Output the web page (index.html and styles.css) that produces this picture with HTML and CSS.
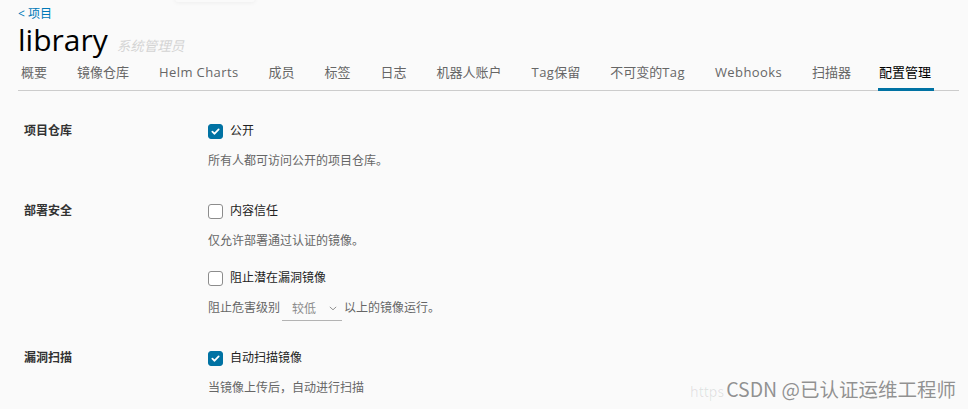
FILE: index.html
```html
<!DOCTYPE html>
<html lang="zh">
<head>
<meta charset="utf-8">
<link rel="stylesheet" href="styles.css">
</head>
<body>
<div class="tip-ghost"></div>
<div class="page">
  <a class="back" href="#">&lt; 项目</a>
  <div class="title-row">
    <h1 class="title">library</h1>
    <span class="role">系统管理员</span>
  </div>
  <nav class="tabs">
    <a class="tab">概要</a>
    <a class="tab">镜像仓库</a>
    <a class="tab"><span class="lat">Helm Charts</span></a>
    <a class="tab">成员</a>
    <a class="tab">标签</a>
    <a class="tab">日志</a>
    <a class="tab">机器人账户</a>
    <a class="tab"><span class="lat">Tag</span>保留</a>
    <a class="tab">不可变的<span class="lat">Tag</span></a>
    <a class="tab"><span class="lat">Webhooks</span></a>
    <a class="tab">扫描器</a>
    <a class="tab active">配置管理</a>
  </nav>

  <div class="form">
    <section class="section">
      <div class="label">项目仓库</div>
      <div class="controls">
        <label class="check"><span class="box on"><svg viewBox="0 0 14 14"><path d="M3.6 7.2 L6 9.4 L10.4 4.8" /></svg></span>公开</label>
        <p class="help">所有人都可访问公开的项目仓库。</p>
      </div>
    </section>

    <section class="section">
      <div class="label">部署安全</div>
      <div class="controls">
        <label class="check"><span class="box"></span>内容信任</label>
        <p class="help">仅允许部署通过认证的镜像。</p>
        <label class="check second"><span class="box"></span>阻止潜在漏洞镜像</label>
        <p class="help">阻止危害级别<span class="select">较低<svg class="chev" viewBox="0 0 10 6"><path d="M1 1 L5 4.6 L9 1" /></svg></span>以上的镜像运行。</p>
      </div>
    </section>

    <section class="section">
      <div class="label">漏洞扫描</div>
      <div class="controls">
        <label class="check"><span class="box on"><svg viewBox="0 0 14 14"><path d="M3.6 7.2 L6 9.4 L10.4 4.8" /></svg></span>自动扫描镜像</label>
        <p class="help">当镜像上传后，自动进行扫描</p>
      </div>
    </section>
  </div>
</div>
<div class="watermark"><span class="wm-url">https</span><span class="wm-main">CSDN @已认证运维工程师</span></div>
</body>
</html>
```

FILE: styles.css
```css
html, body {
  margin: 0;
  padding: 0;
  background: #fafafa;
  font-family: "Open Sans", "Noto Sans CJK SC", sans-serif;
  color: #333;
  overflow: hidden;
}

.page {
  padding: 7px 9px 0 18px;
}

.back {
  display: block;
  font-size: 12px;
  line-height: 14px;
  color: #0079b8;
  text-decoration: none;
}

.title-row {
  display: flex;
  align-items: baseline;
  gap: 9px;
  height: 30px;
  padding-top: 5px;
}

.title {
  margin: 0;
  font-size: 30px;
  font-weight: 400;
  line-height: 28px;
  color: #000;
}

.role {
  font-size: 13.5px;
  font-style: italic;
  color: #d4d4d4;
}

.tabs {
  display: flex;
  gap: 30px;
  padding-left: 3px;
  border-bottom: 1px solid #cccccc;
  margin-top: 4px;
}

.tab {
  font-size: 13px;
  line-height: 18px;
  padding: 3px 0 7px;
  color: #666;
  border-bottom: 3px solid transparent;
  margin-bottom: -1px;
}

.lat {
  letter-spacing: 0.4px;
}

.tab.active {
  color: #000;
  border-bottom-color: #0072a3;
  padding: 3px 3px 7px 1px;
  margin-left: -3px;
}

.form {
  padding: 25px 0 0 6px;
}

.section {
  display: flex;
  margin-bottom: 20px;
}

.label {
  width: 184px;
  flex: none;
  font-size: 12px;
  font-weight: 700;
  line-height: 30px;
  color: #333;
}

.controls {
  display: flex;
  flex-direction: column;
}

.check {
  display: flex;
  align-items: center;
  gap: 7px;
  font-size: 12px;
  line-height: 30px;
  height: 30px;
  color: #222;
}

.check.second {
  margin-top: 7px;
}

.box {
  width: 13px;
  height: 13px;
  border: 1px solid #8c8c8c;
  border-radius: 3px;
  background: #fff;
  display: inline-flex;
}

.box.on {
  background: #0072a3;
  border-color: #0072a3;
}

.box svg {
  width: 13px;
  height: 13px;
}

.box svg path {
  fill: none;
  stroke: #fff;
  stroke-width: 1.9;
  stroke-linecap: round;
  stroke-linejoin: round;
}

.help {
  margin: 0;
  font-size: 12px;
  line-height: 30px;
  height: 30px;
  color: #666;
  display: flex;
  align-items: center;
}

.select {
  display: inline-flex;
  align-items: center;
  width: 50px;
  margin: 0 2px 0 2px;
  padding-left: 10px;
  height: 22px;
  border-bottom: 1px solid #b3b3b3;
  color: #8c8c8c;
  position: relative;
  top: 1px;
}

.chev {
  width: 8px;
  height: 5px;
  margin-left: 13px;
}

.chev path {
  fill: none;
  stroke: #8c8c8c;
  stroke-width: 1.2;
}

.tip-ghost {
  position: absolute;
  left: 175px;
  top: -30px;
  width: 80px;
  height: 32px;
  background: #fafafa;
  box-shadow: 0 1px 4px rgba(0, 0, 0, 0.05);
  border-radius: 3px;
}

.watermark {
  position: absolute;
  right: 12px;
  bottom: 6px;
  display: flex;
  align-items: baseline;
  gap: 2px;
}

.wm-url {
  font-family: "Noto Sans", sans-serif;
  font-size: 14px;
  color: rgba(0, 0, 0, 0.1);
  white-space: nowrap;
}

.wm-main {
  font-family: "Noto Sans CJK SC", sans-serif;
  font-size: 19.5px;
  color: rgba(110, 110, 110, 0.75);
  white-space: nowrap;
}
```
